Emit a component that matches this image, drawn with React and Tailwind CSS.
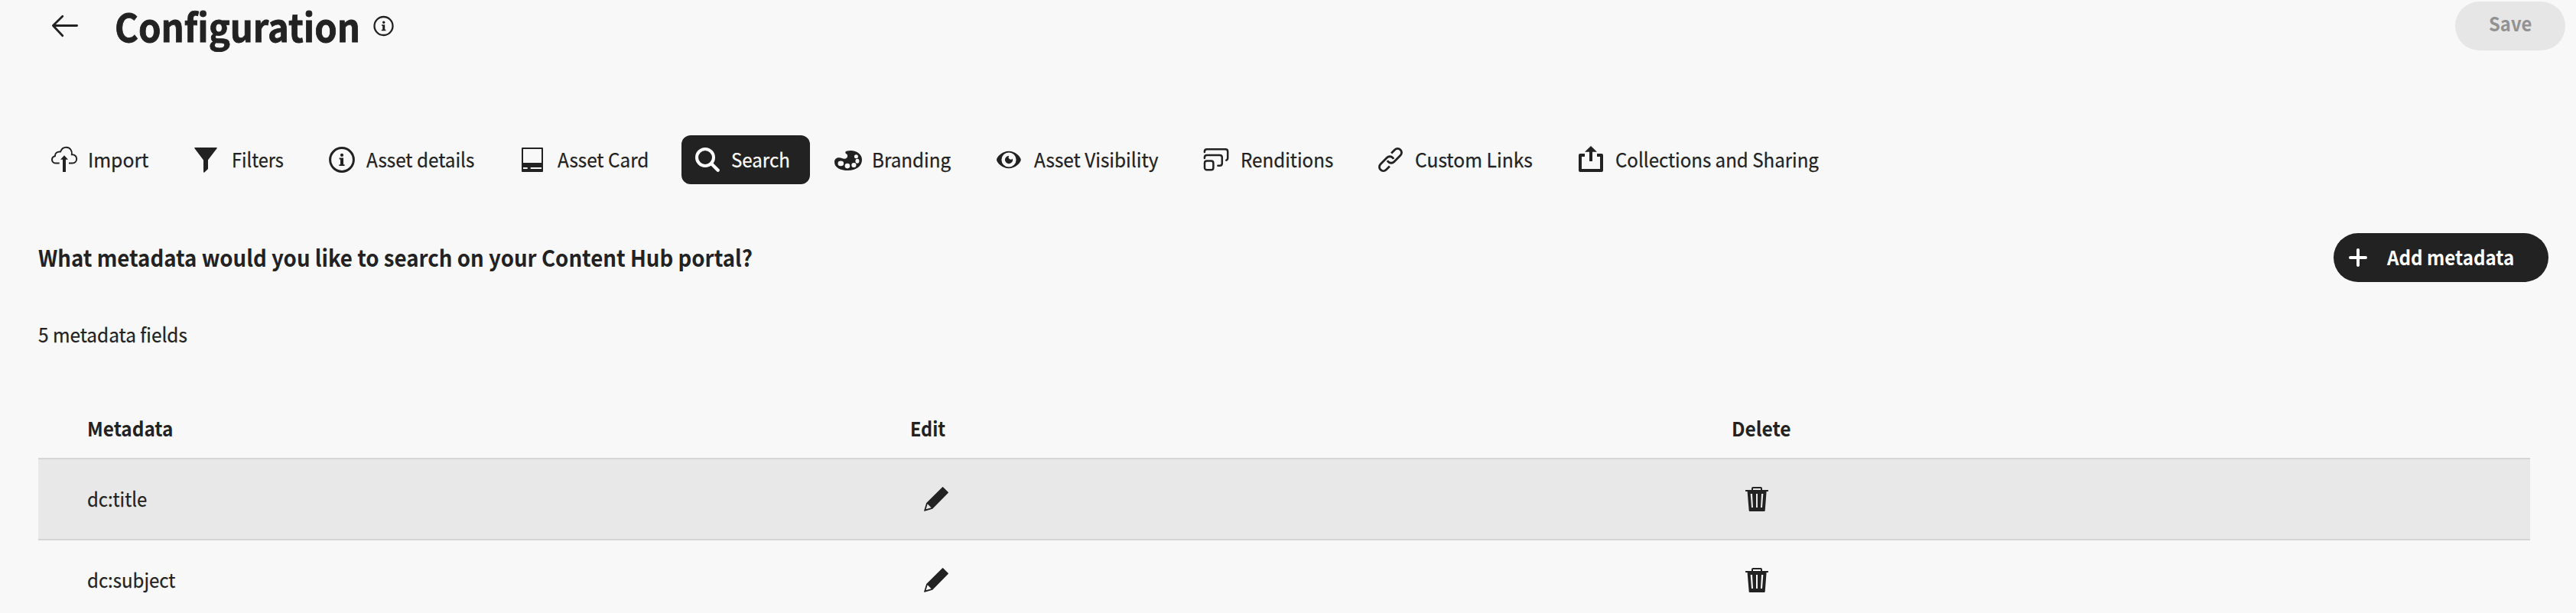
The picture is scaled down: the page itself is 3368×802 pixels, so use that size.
function Label({ children, className = "" }) {
  return (
    <span className={`block w-max origin-left whitespace-nowrap ${className}`}>{children}</span>
  );
}

function Icon({ children, className = "" }) {
  return (
    <svg viewBox="0 0 36 36" className={`h-9 w-9 shrink-0 overflow-visible ${className}`} fill="currentColor">
      {children}
    </svg>
  );
}

const stroke = { fill: "none", stroke: "currentColor" };

const ImportIcon = () => (
  <Icon>
    <path
      {...stroke}
      strokeWidth="2"
      d="M11.7 22.5H7.6C4 22.5 2 20.4 2 17.9C2 15.6 3.6 13.8 5.9 13.3C5.6 9.6 9 6.9 13 7.5C14.3 3.9 17.3 1.7 20.6 1.7C25.3 1.7 28.7 6 27.9 11.2C31.6 10.9 34.2 13.6 34.2 16.8C34.2 20 32 22.5 28.6 22.5H24"
    />
    <path d="M18 12.2L23 17.8H20V33.4Q20 34 19.4 34H16.6Q16 34 16 33.4V17.8H13Z" />
  </Icon>
);

const FilterIcon = () => (
  <Icon>
    <path d="M.8 2H29.2Q30.2 2.2 29.5 3.2L18 18.3V29.3Q18 30 17.5 30.5L13.6 34.3Q12.3 35.2 12 34V18.6L.5 3.2Q-.2 2.2 .8 2Z" />
  </Icon>
);

const InfoIcon = () => (
  <Icon>
    <circle {...stroke} strokeWidth="3" cx="17" cy="18" r="15.4" />
    <circle cx="17" cy="11.9" r="2.1" />
    <path d="M13.6 15.6H19V24.2H20.6V26H13.4V24.2H15V17.4H13.6Z" />
  </Icon>
);

const CardIcon = () => (
  <Icon>
    <path
      fillRule="evenodd"
      d="M3 2H29Q30 2 30 3V33Q30 34 29 34H3Q2 34 2 33V3Q2 2 3 2ZM4 4V22H28V4ZM4 28V30H9.7V28ZM13.7 28V30H28V28Z"
    />
  </Icon>
);

const SearchIcon = () => (
  <Icon>
    <circle {...stroke} strokeWidth="4" cx="15" cy="15" r="11" />
    <path {...stroke} strokeWidth="4.4" strokeLinecap="round" d="M23 23L31.7 31.7" />
  </Icon>
);

const PaletteIcon = () => (
  <Icon>
    <path
      fillRule="evenodd"
      d="M15.6 6.8C17.3 6.2 19.3 6 21.3 6C29.6 6 36 11 36 18C36 26.5 28 32 17.8 32C7.5 32 0 27.8 0 20.9C0 17.3 2.6 15.3 6.3 15.3C9 15.3 10.4 16.8 13 16.8C15.4 16.8 17.1 15.2 17.1 12.9C17.1 10.4 14.3 10.6 14.3 8.6C14.3 7.7 14.8 7.1 15.6 6.8ZM4.5 22.9A3.8 3.3 0 1 0 12.1 22.9A3.8 3.3 0 1 0 4.5 22.9ZM13.6 26.1A3.3 3.3 0 1 0 20.2 26.1A3.3 3.3 0 1 0 13.6 26.1ZM22.3 25A3.1 3.1 0 1 0 28.5 25A3.1 3.1 0 1 0 22.3 25ZM27.4 19.7A2.5 3 0 1 0 32.4 19.7A2.5 3 0 1 0 27.4 19.7ZM25.9 13.7A2.5 2.5 0 1 0 30.9 13.7A2.5 2.5 0 1 0 25.9 13.7Z"
    />
  </Icon>
);

const EyeIcon = () => (
  <Icon>
    <path
      fillRule="evenodd"
      d="M16 6.7C24.5 6.7 31.8 14.2 31.8 18C31.8 21.8 24.5 29.3 16 29.3C7.5 29.3 0 21.8 0 18C0 14.2 7.5 6.7 16 6.7ZM16 8.4A9.6 9.6 0 1 0 16 27.6A9.6 9.6 0 1 0 16 8.4Z"
    />
    <path d="M16.4 13A2.6 2.6 0 1 0 20.9 16.6A5.1 5.1 0 1 1 16.4 13Z" />
  </Icon>
);

const RenditionsIcon = () => (
  <Icon>
    <g {...stroke} strokeWidth="2.5" strokeLinecap="round">
      <path d="M1.9 8V7.3Q1.9 4.3 4.9 4.3H29.2Q32.2 4.3 32.2 7.3V15.8Q32.2 18 30.3 18.6" />
      <path d="M1.9 15.9V15.1Q1.9 12.1 4.9 12.1H21.8Q24.8 12.1 24.8 15.1V22.7Q24.8 25.7 21.8 25.7H19.4" />
      <rect x="2" y="19.6" width="11.4" height="11.6" rx="2.8" />
    </g>
  </Icon>
);

const LinkIcon = () => (
  <Icon>
    <g {...stroke} strokeWidth="2.8">
      <path d="M18.1 9.4L22.6 4.9A5.2 5.2 0 0 1 30 12.3L21.6 20.7A5.2 5.2 0 0 1 14.2 20.7Q13.5 20 13.1 18.9" />
      <path d="M15.9 26.6L11.4 31.1A5.2 5.2 0 0 1 4 23.7L12.4 15.3A5.2 5.2 0 0 1 19.8 15.3Q20.5 16 20.9 17.1" />
    </g>
  </Icon>
);

const ShareIcon = () => (
  <Icon>
    <path {...stroke} strokeWidth="4" strokeLinejoin="round" d="M9 12H3V32H31V12H25" />
    <path d="M17 0L25 7.8H19V19.4Q19 20 18.4 20H15.6Q15 20 15 19.4V7.8H9Z" />
  </Icon>
);

const PencilIcon = () => (
  <svg viewBox="0 0 32 32" className="h-8 w-8" fill="currentColor">
    <path
      fillRule="evenodd"
      d="M23.9 .4Q24.6 -.2 25.3 .4L31.6 6.7Q32.2 7.4 31.6 8.1L11.2 28.7L1 31.7Q-.1 31.9 .2 30.8L3.2 20.9ZM4.7 22.2L2.6 29.3L9.6 27.2Z"
    />
  </svg>
);

const TrashIcon = () => (
  <svg viewBox="0 0 30 32" className="h-8 w-[30px]" fill="currentColor">
    <path
      fillRule="evenodd"
      d="M8 4V2Q8 0 10 0H20Q22 0 22 2V4H29.5Q30 4 30 4.5V5.5Q30 6 29.5 6H27.6L25.7 31Q25.6 32 24.7 32H5.7Q4.8 32 4.7 31L2.6 6H.5Q0 6 0 5.5V4.5Q0 4 .5 4ZM10 4H20V2H10ZM6.7 9L8 27H10L9 9ZM14 9V27H16V9ZM21 9L20 27H22L23.3 9Z"
    />
  </svg>
);

const tabs = [
  { name: "Import", icon: ImportIcon, box: "w-[172px]", text: "scale-x-[0.95]" },
  { name: "Filters", icon: FilterIcon, box: "w-[160px]", text: "scale-x-[0.905]" },
  { name: "Asset details", icon: InfoIcon, box: "w-[234px]", text: "scale-x-[0.934]" },
  { name: "Asset Card", icon: CardIcon, box: "w-[211px]", text: "scale-x-[0.935]" },
  { name: "Search", icon: SearchIcon, box: "w-[168px]", text: "scale-x-[0.926]", active: true },
  { name: "Branding", icon: PaletteIcon, box: "w-[196px]", text: "scale-x-[0.932]" },
  { name: "Asset Visibility", icon: EyeIcon, box: "w-[254px]", text: "scale-x-[0.938]" },
  { name: "Renditions", icon: RenditionsIcon, box: "w-[212px]", text: "scale-x-[0.929]" },
  { name: "Custom Links", icon: LinkIcon, box: "w-[246px]", text: "scale-x-[0.947]" },
  { name: "Collections and Sharing", icon: ShareIcon, box: "w-[359px]", text: "scale-x-[0.926]" },
];

const rows = [
  { field: "dc:title", look: "bg-[#e8e8e8]", text: "scale-x-[0.918]" },
  { field: "dc:subject", look: "", text: "scale-x-[0.923]" },
];

export default function App() {
  return (
    <div className="h-[802px] w-full overflow-hidden bg-[#f8f8f8] font-['Noto_Sans_CJK_SC','Noto_Sans',sans-serif] text-[26px] text-[#222222] [-webkit-text-stroke-width:0.25px]">
      <header className="flex h-[177px] items-start pr-[14px] pl-[66px]">
        <button aria-label="Back" className="mt-4 h-9 w-9">
          <svg viewBox="0 0 36 36" className="h-9 w-9" {...stroke} strokeWidth="2.8" strokeLinecap="round" strokeLinejoin="round">
            <path d="M34.6 17.5H3.4M15.8 5.3L3.4 17.5L15.8 30.7" />
          </svg>
        </button>
        <h1 className="ml-[47.5px] w-[336px] text-[50px] leading-[66px] font-bold">
          <Label className="scale-x-[0.944] [-webkit-text-stroke-width:0.8px]">Configuration</Label>
        </h1>
        <svg viewBox="0 0 30 30" className="mt-[19px] h-[30px] w-[30px]" fill="currentColor">
          <circle {...stroke} strokeWidth="2.3" cx="15.5" cy="15" r="12" />
          <circle cx="15.7" cy="10.3" r="1.7" />
          <path d="M13 13.3H17.2V19.8H18.4V21.2H12.8V19.8H14.2V14.7H13Z" />
        </svg>
        <button
          disabled
          className="mt-0.5 ml-auto flex h-16 w-36 rounded-full bg-[#e6e6e6] pl-[44px] leading-[55px] font-bold text-[#929292] [-webkit-text-stroke-width:0]"
        >
          <Label className="scale-x-[0.915]">Save</Label>
        </button>
      </header>

      <nav className="flex gap-4 pl-[50px]">
        {tabs.map(({ name, icon: TabIcon, box, text, active }) => (
          <button
            key={name}
            className={`flex h-16 shrink-0 items-start gap-[12.5px] rounded-xl pl-4 ${box} ${active ? "bg-[#222222] text-white" : ""}`}
          >
            <span className="mt-3.5">
              <TabIcon />
            </span>
            <Label className={`leading-[61px] ${text}`}>{name}</Label>
          </button>
        ))}
      </nav>

      <main className="pt-16 pl-[50px]">
        <div className="flex h-16 items-start justify-between pr-9 [-webkit-text-stroke-width:0]">
          <h2 className="w-[940px] text-[29.5px] leading-[63px] font-bold">
            <Label className="scale-x-[0.937]">
              What metadata would you like to search on your Content Hub portal?
            </Label>
          </h2>
          <button className="flex h-16 w-[281px] items-start rounded-full bg-[#222222] pl-5 leading-[61px] font-bold text-white">
            <svg viewBox="0 0 24 24" className="mt-5 mr-[26px] h-6 w-6 shrink-0" {...stroke} strokeWidth="4" strokeLinecap="round">
              <path d="M12 2V22M2 12H22" />
            </svg>
            <Label className="scale-x-[0.929]">Add metadata</Label>
          </button>
        </div>

        <p className="mt-[49px] leading-[37px]">
          <Label className="scale-x-[0.937]">5 metadata fields</Label>
        </p>

        <section className="mt-[86px] w-[3258px]">
          <div className="grid h-[58px] grid-cols-[1076px_1074px_1fr] pl-[63.5px] leading-[37px] font-bold [-webkit-text-stroke-width:0]">
            <Label className="scale-x-[0.937]">Metadata</Label>
            <Label className="scale-x-[0.9]">Edit</Label>
            <Label className="scale-x-[0.944]">Delete</Label>
          </div>
          {rows.map(({ field, look, text }) => (
            <div
              key={field}
              className={`grid h-[106px] grid-cols-[1076px_1074px_1fr] border-t-2 border-[#d5d5d5] pl-[63.5px] ${look}`}
            >
              <Label className={`leading-[101px] ${text}`}>{field}</Label>
              <button aria-label={`Edit ${field}`} className="mt-9 ml-[18.5px] h-8 w-8">
                <PencilIcon />
              </button>
              <button aria-label={`Delete ${field}`} className="mt-9 ml-[18.5px] h-8 w-8">
                <TrashIcon />
              </button>
            </div>
          ))}
        </section>
      </main>
    </div>
  );
}
